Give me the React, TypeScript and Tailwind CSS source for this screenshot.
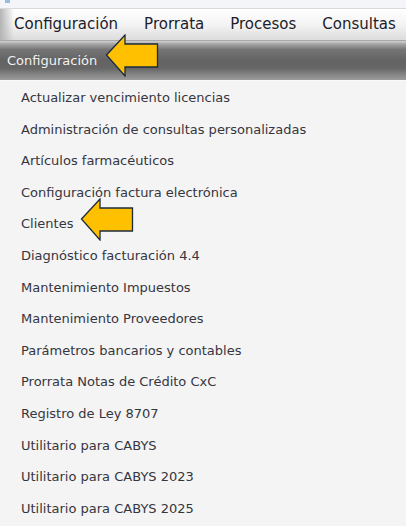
import React from 'react';

const menus = ['Configuración', 'Prorrata', 'Procesos', 'Consultas'];

const items = [
  'Actualizar vencimiento licencias',
  'Administración de consultas personalizadas',
  'Artículos farmacéuticos',
  'Configuración factura electrónica',
  'Clientes',
  'Diagnóstico facturación 4.4',
  'Mantenimiento Impuestos',
  'Mantenimiento Proveedores',
  'Parámetros bancarios y contables',
  'Prorrata Notas de Crédito CxC',
  'Registro de Ley 8707',
  'Utilitario para CABYS',
  'Utilitario para CABYS 2023',
  'Utilitario para CABYS 2025',
];

const Arrow: React.FC<{ className: string }> = ({ className }) => (
  <svg className={className} width="54" height="43" viewBox="0 0 54 43">
    <polygon
      points="1.5,21 20,1 20,10 52.5,10 52.5,33 20,33 20,42"
      fill="#ffc000"
      stroke="#1d2b3a"
      strokeWidth="1.3"
      strokeLinejoin="miter"
    />
  </svg>
);

const App: React.FC = () => {
  return (
    <div
      className="relative w-[406px] h-[526px] overflow-hidden bg-[#f4f4f4] flex flex-col"
      style={{ fontFamily: '"DejaVu Sans", Verdana, sans-serif' }}
    >
      {/* window top strip */}
      <div className="h-[9px] bg-[#f3f5f8] border-b border-[#dadada] relative">
        <div className="absolute left-[5px] top-0 w-[5px] h-[3px] bg-[#9bbbe0]" />
      </div>

      {/* Menu bar */}
      <div className="h-[32px] flex items-center bg-[linear-gradient(to_bottom,#ffffff_0%,#f4f4f4_50%,#dcdcdc_100%)] border-b border-[#a8a8a8] relative">
        <div className="absolute left-0 top-0 bottom-0 w-[14px] bg-[linear-gradient(to_right,#b4b4b4,rgba(255,255,255,0))]" />
        <div className="flex items-center pl-[14px] gap-[26px] text-[15px] text-[#1c1c2a] relative">
          {menus.map((m) => (
            <span key={m} className="whitespace-nowrap">{m}</span>
          ))}
        </div>
      </div>

      {/* Section header */}
      <div className="h-[39px] flex items-center pl-[7px] bg-[linear-gradient(to_bottom,#d2d2d2_0%,#a4a4a4_8%,#757575_22%,#636363_50%,#666666_70%,#888888_88%,#9c9c9c_100%)]">
        <span className="text-[13px] text-[#f2f2f2]">Configuración</span>
      </div>

      {/* Items */}
      <div className="flex flex-col pt-[1px] border-t border-[#fafafa]">
        {items.map((it) => (
          <div key={it} className="h-[31.6px] flex items-center pl-[21px] text-[13px] text-[#363640] whitespace-nowrap">
            {it}
          </div>
        ))}
      </div>

      <Arrow className="absolute left-[105px] top-[34px]" />
      <Arrow className="absolute left-[80px] top-[198px]" />
    </div>
  );
};

export default App;
